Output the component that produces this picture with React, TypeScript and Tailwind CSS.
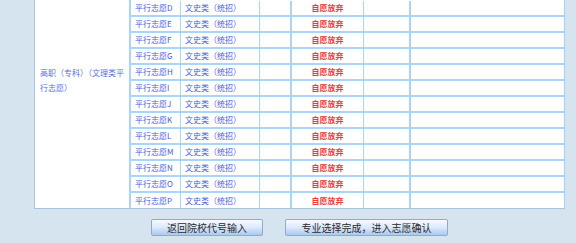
const rows = ["D", "E", "F", "G", "H", "I", "J", "K", "L", "M", "N", "O", "P"];

const cjk = { fontFamily: '"Noto Sans CJK SC", "Noto Sans", sans-serif' };

function ChoiceRow({ letter, last }: { letter: string; last: boolean }) {
  const line = last ? "h-[15px]" : "h-[16px] border-b-2 border-[#abd5f7]";
  return (
    <div className={`flex ${line}`}>
      <div className="flex w-[50px] items-center border-r border-[#abd5f7] pl-[4px] text-[#4b5bdc]">
        平行志愿{letter}
      </div>
      <div className="flex w-[79px] items-center border-r border-[#abd5f7] pl-[4px] text-[#4a5fd8]">
        文史类（统招）
      </div>
      <div className="w-[32px] border-r-2 border-[#abd5f7]" />
      <div className="flex w-[72px] items-center justify-center border-r border-[#abd5f7] font-bold text-[#f03a3a]">
        自愿放弃
      </div>
      <div className="w-[47px] border-r-2 border-[#abd5f7]" />
      <div className="w-[153px]" />
    </div>
  );
}

function ActionButton({ label, width }: { label: string; width: string }) {
  return (
    <button
      className={`${width} h-[17px] rounded-[2px] border border-[#93abcb] bg-gradient-to-b from-[#f7faff] via-[#dce9fb] to-[#a9c8f2] text-[10px] leading-none text-[#2b2b2b]`}
      style={cjk}
    >
      {label}
    </button>
  );
}

export default function App() {
  return (
    <div className="h-[243px] w-[576px] overflow-hidden bg-[#d6e4ef]" style={cjk}>
      {/* table is scrolled: its top rows sit above the window */}
      <div className="ml-[34px] flex w-[531px] border border-t-0 border-l-[#aac3db] border-b-[#aac3db] border-r-[#a6d0f3] bg-white text-[8px] leading-none">
        <div className="w-[96px] border-r-2 border-[#abd5f7] pl-[5px] pt-[65px] text-[#5870e0]">
          <div className="whitespace-nowrap leading-[15px]">
            高职（专科）（文理类平
            <br />
            行志愿）
          </div>
        </div>
        <div className="flex flex-col pt-[1px]">
          {rows.map((r, i) => (
            <ChoiceRow key={r} letter={r} last={i === rows.length - 1} />
          ))}
        </div>
      </div>
      <div className="ml-[34px] mt-[10px] flex w-[531px] justify-center gap-[22px]">
        <ActionButton label="返回院校代号输入" width="w-[112px]" />
        <ActionButton label="专业选择完成，进入志愿确认" width="w-[163px]" />
      </div>
    </div>
  );
}
